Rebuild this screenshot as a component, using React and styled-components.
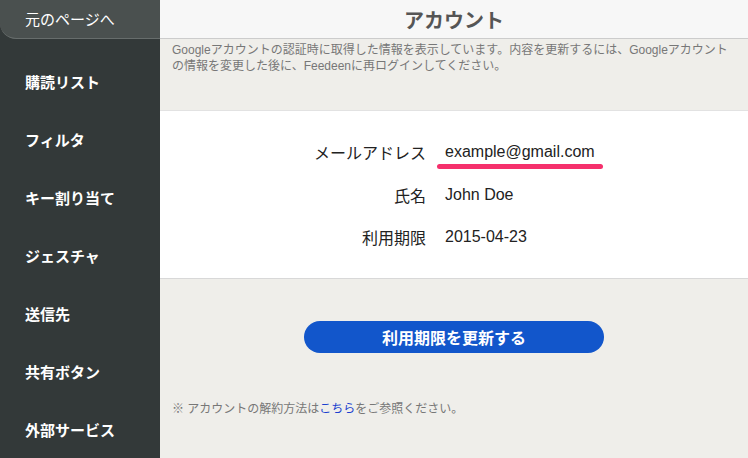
import React from 'react';
import styled, { createGlobalStyle } from 'styled-components';

const GlobalStyle = createGlobalStyle`
	html, body {
		margin: 0;
		padding: 0;
		height: 100%;
	}
	body {
		font-family: 'Liberation Sans', 'Noto Sans CJK JP', sans-serif;
		-webkit-font-smoothing: antialiased;
	}
`;

const navItems = ['購読リスト', 'フィルタ', 'キー割り当て', 'ジェスチャ', '送信先', '共有ボタン', '外部サービス'];

const accountRows = [
	{ label: 'メールアドレス', value: 'example@gmail.com', marked: true },
	{ label: '氏名', value: 'John Doe' },
	{ label: '利用期限', value: '2015-04-23' },
];

function App() {
	return (
		<>
			<GlobalStyle />
			<Layout>
				<Sidebar>
					<BackLink>元のページへ</BackLink>
					<NavList>
						{navItems.map((item) => (
							<NavItem key={item}>{item}</NavItem>
						))}
					</NavList>
				</Sidebar>
				<Main>
					<Header>
						<Title>アカウント</Title>
					</Header>
					<Notice>
						Googleアカウントの認証時に取得した情報を表示しています。内容を更新するには、Googleアカウントの情報を変更した後に、Feedeenに再ログインしてください。
					</Notice>
					<InfoPanel>
						{accountRows.map((row) => (
							<InfoRow key={row.label}>
								<Label>{row.label}</Label>
								<Value $marked={row.marked}>{row.value}</Value>
							</InfoRow>
						))}
					</InfoPanel>
					<Actions>
						<RenewButton>利用期限を更新する</RenewButton>
					</Actions>
					<Footnote>
						※ アカウントの解約方法は<FootLink href='#'>こちら</FootLink>をご参照ください。
					</Footnote>
				</Main>
			</Layout>
		</>
	);
}

const Layout = styled.div`
	display: flex;
	height: 100vh;
	overflow: hidden;
`;

const Sidebar = styled.nav`
	width: 160px;
	flex-shrink: 0;
	background-color: #333939;
	display: flex;
	flex-direction: column;
`;

const BackLink = styled.div`
	height: 38px;
	line-height: 40px;
	padding-left: 25px;
	background-color: #4a504f;
	border-bottom: 1px solid #676d6c;
	border-bottom-left-radius: 16px;
	color: #ffffff;
	font-size: 15px;
`;

const NavList = styled.ul`
	list-style: none;
	margin: 0;
	padding: 15px 0 0;
`;

const NavItem = styled.li`
	height: 58px;
	line-height: 58px;
	padding-left: 25px;
	color: #ffffff;
	font-size: 15px;
	font-weight: bold;
`;

const Main = styled.main`
	flex: 1;
	background-color: #efeeea;
	display: flex;
	flex-direction: column;
`;

const Header = styled.header`
	height: 38px;
	flex-shrink: 0;
	background-color: #f7f7f7;
	border-bottom: 1px solid #cccccc;
	display: flex;
	align-items: center;
	justify-content: center;
`;

const Title = styled.h1`
	margin: 0;
	font-size: 20px;
	font-weight: bold;
	color: #555555;
`;

const Notice = styled.p`
	margin: 0;
	height: 71px;
	flex-shrink: 0;
	box-sizing: border-box;
	padding: 3px 12px 0;
	font-size: 12px;
	line-height: 16px;
	color: #777777;
`;

const InfoPanel = styled.section`
	background-color: #ffffff;
	border-top: 1px solid #e2e2e2;
	border-bottom: 1px solid #d8d8d8;
	height: 169px;
	flex-shrink: 0;
	box-sizing: border-box;
	padding-top: 20px;
`;

const InfoRow = styled.div`
	display: grid;
	grid-template-columns: 266px 1fr;
	column-gap: 19px;
	align-items: center;
	height: 42.5px;
	font-size: 16px;
	color: #222222;
`;

const Label = styled.span`
	text-align: right;
`;

const Value = styled.span`
	position: relative;
	justify-self: start;

	${(props) =>
		props.$marked &&
		`
		&::after {
			content: '';
			position: absolute;
			left: -8px;
			right: -8px;
			bottom: -8px;
			height: 5px;
			border-radius: 3px;
			background-color: #f5306c;
		}
	`}
`;

const Actions = styled.div`
	display: flex;
	justify-content: center;
	padding-top: 42px;
`;

const RenewButton = styled.button`
	width: 300px;
	height: 32px;
	border: none;
	border-radius: 16px;
	background-color: #1256cb;
	color: #ffffff;
	font-family: inherit;
	font-size: 16px;
	font-weight: bold;
	cursor: pointer;
`;

const Footnote = styled.p`
	margin: 48px 0 0;
	padding-left: 12px;
	font-size: 12px;
	line-height: 16px;
	color: #777777;
`;

const FootLink = styled.a`
	color: #1a3fcf;
	text-decoration: none;
`;

export default App;
